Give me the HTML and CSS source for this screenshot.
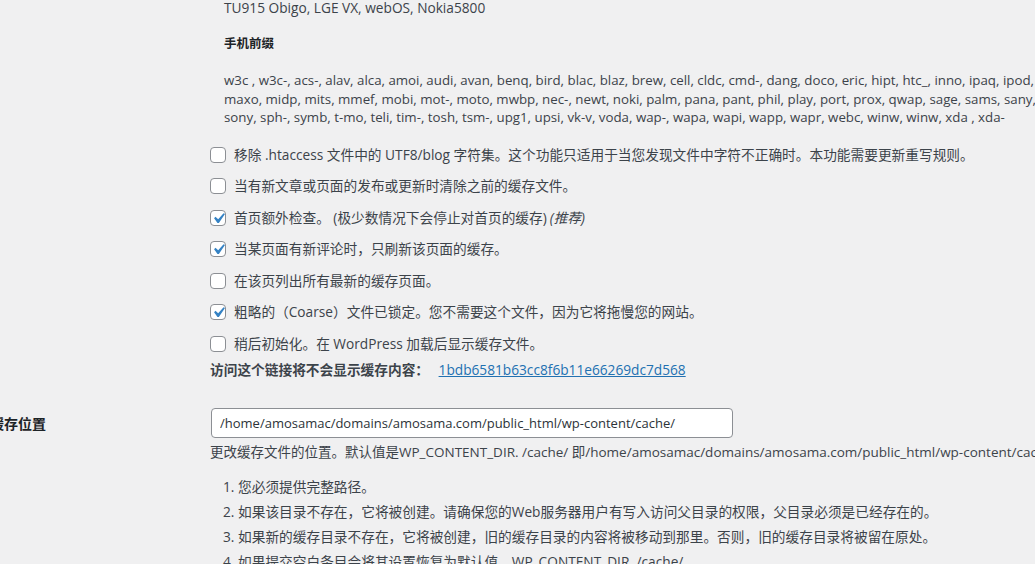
FILE: index.html
```html
<!DOCTYPE html>
<html lang="zh-CN">
<head>
    <meta charset="UTF-8">
    <title>WP Super Cache 高级设置</title>
    <link rel="stylesheet" href="styles.css">
</head>
<body>
    <div class="wrap">
        <div class="row">
            <div class="row-label"></div>
            <div class="row-field">
                <div class="mobile">
                    <p class="agents">TU915 Obigo, LGE VX, webOS, Nokia5800</p>
                    <h4>手机前缀</h4>
                    <p class="prefixes">w3c , w3c-, acs-, alav, alca, amoi, audi, avan, benq, bird, blac, blaz, brew, cell, cldc, cmd-, dang, doco, eric, hipt, htc_, inno, ipaq, ipod, jigs, kddi, keji, leno, lg-c<br>maxo, midp, mits, mmef, mobi, mot-, moto, mwbp, nec-, newt, noki, palm, pana, pant, phil, play, port, prox, qwap, sage, sams, sany, sch-, siem, smal, smar<br>sony, sph-, symb, t-mo, teli, tim-, tosh, tsm-, upg1, upsi, vk-v, voda, wap-, wapa, wapi, wapp, wapr, webc, winw, winw, xda , xda-</p>
                </div>

                <div class="options">
                    <label class="option"><span class="cb"></span>移除 .htaccess 文件中的 UTF8/blog 字符集。这个功能只适用于当您发现文件中字符不正确时。本功能需要更新重写规则。</label>
                    <label class="option"><span class="cb"></span>当有新文章或页面的发布或更新时清除之前的缓存文件。</label>
                    <label class="option"><span class="cb checked"><svg viewBox="0 0 20 20"><path d="M14.83 4.89l1.34.94-5.81 8.38H9.02L5.78 9.67l1.34-1.25 2.57 2.4z"/></svg></span>首页额外检查。 (极少数情况下会停止对首页的缓存) <em>(推荐)</em></label>
                    <label class="option"><span class="cb checked"><svg viewBox="0 0 20 20"><path d="M14.83 4.89l1.34.94-5.81 8.38H9.02L5.78 9.67l1.34-1.25 2.57 2.4z"/></svg></span>当某页面有新评论时，只刷新该页面的缓存。</label>
                    <label class="option"><span class="cb"></span>在该页列出所有最新的缓存页面。</label>
                    <label class="option"><span class="cb checked"><svg viewBox="0 0 20 20"><path d="M14.83 4.89l1.34.94-5.81 8.38H9.02L5.78 9.67l1.34-1.25 2.57 2.4z"/></svg></span>粗略的（Coarse）文件已锁定。您不需要这个文件，因为它将拖慢您的网站。</label>
                    <label class="option"><span class="cb"></span>稍后初始化。在 WordPress 加载后显示缓存文件。</label>
                </div>

                <p class="secret"><strong>访问这个链接将不会显示缓存内容：</strong> <a href="#">1bdb6581b63cc8f6b11e66269dc7d568</a></p>
            </div>
        </div>

        <div class="row row-location">
            <div class="row-label">缓存位置</div>
            <div class="row-field">
                <input type="text" class="path-input" value="/home/amosamac/domains/amosama.com/public_html/wp-content/cache/">
                <p class="description">更改缓存文件的位置。默认值是WP_CONTENT_DIR. /cache/ 即/home/amosamac/domains/amosama.com/public_html/wp-content/cache/</p>
                <ol class="notes">
                    <li>您必须提供完整路径。</li>
                    <li>如果该目录不存在，它将被创建。请确保您的Web服务器用户有写入访问父目录的权限，父目录必须是已经存在的。</li>
                    <li>如果新的缓存目录不存在，它将被创建，旧的缓存目录的内容将被移动到那里。否则，旧的缓存目录将被留在原处。</li>
                    <li>如果提交空白条目会将其设置恢复为默认值，WP_CONTENT_DIR. /cache/</li>
                </ol>
            </div>
        </div>
    </div>
</body>
</html>
```

FILE: styles.css
```css
html, body {
    margin: 0;
    overflow: hidden;
}

body {
    background: #f0f0f1;
    color: #3c434a;
    font-family: "Open Sans", "Noto Sans CJK SC", sans-serif;
    font-size: 13.7px;
    line-height: 18px;
}

/* Settings rows */
.wrap {
    margin-left: -10px;
    width: 1400px;
}

.row {
    display: flex;
}

.row-location {
    margin-top: 28px;
}

.row-label {
    flex: none;
    width: 200px;
    padding-right: 10px;
    padding-top: 6px;
    font-size: 14px;
    line-height: 20px;
    font-weight: bold;
    color: #1d2327;
}

.row-field {
    flex: 1;
    padding-left: 10px;
}

/* Mobile browsers list */
.mobile {
    padding-left: 14px;
    margin-top: -1px;
}

.mobile p {
    margin: 0;
}

.mobile h4 {
    margin: 18px 0 18px;
    font-size: 12.5px;
    line-height: 18px;
    font-weight: bold;
    color: #1d2327;
}

.prefixes {
    line-height: 18.5px;
    font-size: 13.3px;
}

/* Checkbox options */
.options {
    margin-top: 18px;
}

.option {
    display: flex;
    align-items: center;
    height: 20px;
    margin-bottom: 11.5px;
    white-space: nowrap;
}

.option:last-child {
    margin-bottom: 0;
}

.option em {
    margin-left: 3px;
}

.cb {
    flex: none;
    box-sizing: border-box;
    width: 16px;
    height: 16px;
    margin-right: 8px;
    background: #fff;
    border: 1px solid #8c8f94;
    border-radius: 4px;
    position: relative;
}

.cb svg {
    position: absolute;
    left: -3px;
    top: -3px;
    width: 21px;
    height: 21px;
    fill: #3582c4;
}

.secret {
    margin: 6px 0 0;
    line-height: 20px;
}

.secret strong {
    color: #3c434a;
}

.secret a {
    color: #2271b1;
    margin-left: 6px;
}

/* Cache location */
.path-input {
    display: block;
    box-sizing: border-box;
    width: 522px;
    height: 30px;
    margin: 0 0 0 1px;
    padding: 0 8px;
    background: #fff;
    border: 1px solid #8c8f94;
    border-radius: 4px;
    color: #2c3338;
    font-family: inherit;
    font-size: 13px;
}

.description {
    margin: 5px 0 0;
    white-space: nowrap;
    font-size: 13.5px;
    color: #3c434a;
}

.notes {
    margin: 16.5px 0 0;
    padding-left: 28px;
}

.notes li {
    line-height: 19px;
    margin-bottom: 6px;
    white-space: nowrap;
}
```
